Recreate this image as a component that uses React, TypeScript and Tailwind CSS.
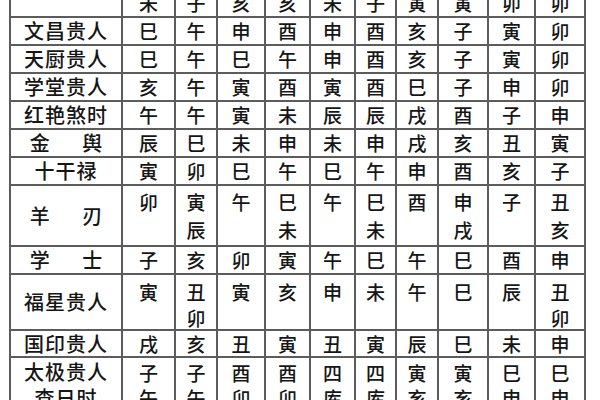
import React from "react";

type Row = {
  label: string[];
  labelSpaced?: boolean;
  cells: string[][];
  h: string;
  multi?: string;
  lh?: string;
  extra?: string;
};

const W = ["w-[112px]", "w-[53px]", "w-[42px]", "w-[48px]", "w-[45px]", "w-[45px]", "w-[41px]", "w-[42px]", "w-[50px]", "w-[47px]", "w-[50px]"];

const s = (t: string) => t.split(" ").map((x) => x.split(""));

const rows: Row[] = [
  {
    label: [""],
    cells: [["丑", "未"], ["申", "子"], ["酉", "亥"], ["酉", "亥"], ["丑", "未"], ["申", "子"], ["午", "寅"], ["午", "寅"], ["巳", "卯"], ["巳", "卯"]],
    h: "h-[56px]",
    multi: "pt-[2px]",
    lh: "leading-[26px]",
    extra: "-mt-[38px]",
  },
  { label: ["文昌贵人"], cells: s("巳 午 申 酉 申 酉 亥 子 寅 卯"), h: "h-[28px]" },
  { label: ["天厨贵人"], cells: s("巳 午 巳 午 申 酉 亥 子 寅 卯"), h: "h-[28px]" },
  { label: ["学堂贵人"], cells: s("亥 午 寅 酉 寅 酉 巳 子 申 卯"), h: "h-[28px]" },
  { label: ["红艳煞时"], cells: s("午 午 寅 未 辰 辰 戌 酉 子 申"), h: "h-[28px]" },
  { label: ["金 舆"], labelSpaced: true, cells: s("辰 巳 未 申 未 申 戌 亥 丑 寅"), h: "h-[28px]" },
  { label: ["十干禄"], cells: s("寅 卯 巳 午 巳 午 申 酉 亥 子"), h: "h-[28px]" },
  {
    label: ["羊 刃"],
    labelSpaced: true,
    cells: [["卯"], ["寅", "辰"], ["午"], ["巳", "未"], ["午"], ["巳", "未"], ["酉"], ["申", "戌"], ["子"], ["丑", "亥"]],
    h: "h-[61px]",
    multi: "pt-[2px]",
    lh: "leading-[28px]",
  },
  { label: ["学 士"], labelSpaced: true, cells: s("子 亥 卯 寅 午 巳 午 巳 酉 申"), h: "h-[28px]" },
  {
    label: ["福星贵人"],
    cells: [["寅"], ["丑", "卯"], ["寅"], ["亥"], ["申"], ["未"], ["午"], ["巳"], ["辰"], ["丑", "卯"]],
    h: "h-[56px]",
    multi: "pt-[4px]",
    lh: "leading-[26px]",
  },
  { label: ["国印贵人"], cells: s("戌 亥 丑 寅 丑 寅 辰 巳 未 申"), h: "h-[27px]" },
  {
    label: ["太极贵人", "查日时"],
    cells: [["子", "午"], ["子", "午"], ["酉", "卯"], ["酉", "卯"], ["四", "库"], ["四", "库"], ["寅", "亥"], ["寅", "亥"], ["巳", "申"], ["巳", "申"]],
    h: "h-[56px]",
    multi: "pt-[2px]",
    lh: "leading-[25px]",
  },
];

export default function App() {
  return (
    <div
      className="w-[600px] h-[400px] overflow-hidden bg-white text-[#161616]"
      style={{ fontFamily: '"Noto Sans CJK SC", "Noto Sans CJK TC", sans-serif' }}
    >
      <div className="ml-[9px] w-[577px] border-l-2 border-[#5c5c5c] flex flex-col">
        {rows.map((r, ri) => {
          const labelIsMultiLine = r.label.length > 1;
          return (
            <div key={ri} className={`flex shrink-0 border-b-2 border-[#5c5c5c] ${r.h} ${r.extra ?? ""}`}>
              <div
                className={`${W[0]} shrink-0 border-r-2 border-[#5c5c5c] flex flex-col items-center ${
                  labelIsMultiLine ? "justify-start pt-[1px] leading-[26px]" : "justify-center leading-[26px]"
                } text-[20px] font-medium`}
              >
                {r.label.map((l, i) => (
                  <div key={i} className={r.labelSpaced ? "tracking-[14px] pl-[14px]" : "tracking-[1px]"}>
                    {l}
                  </div>
                ))}
              </div>
              {r.cells.map((c, ci) => (
                <div
                  key={ci}
                  className={`${W[ci + 1]} shrink-0 border-r-2 border-[#5c5c5c] flex flex-col items-center text-[19px] font-medium ${
                    r.multi ? `justify-start ${r.multi} ${r.lh}` : "justify-center leading-[26px]"
                  }`}
                >
                  {c.map((ch, k) => (
                    <div key={k}>{ch}</div>
                  ))}
                </div>
              ))}
            </div>
          );
        })}
      </div>
    </div>
  );
}
